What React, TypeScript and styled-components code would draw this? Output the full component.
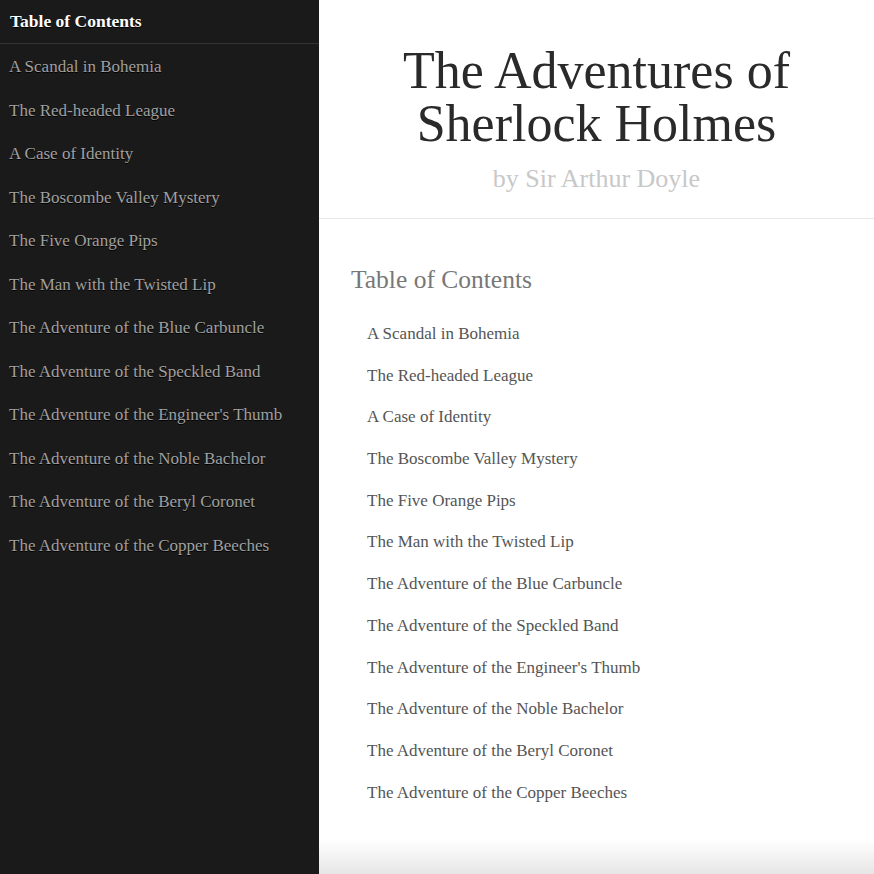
import React from "react";
import styled, { createGlobalStyle } from "styled-components";

const GlobalStyle = createGlobalStyle`
  html, body { margin: 0; padding: 0; height: 100%; }
  body { font-family: "Liberation Serif", "DejaVu Serif", serif; background: #fff; }
  #root { height: 100%; }
`;

const chapters = [
  "A Scandal in Bohemia",
  "The Red-headed League",
  "A Case of Identity",
  "The Boscombe Valley Mystery",
  "The Five Orange Pips",
  "The Man with the Twisted Lip",
  "The Adventure of the Blue Carbuncle",
  "The Adventure of the Speckled Band",
  "The Adventure of the Engineer's Thumb",
  "The Adventure of the Noble Bachelor",
  "The Adventure of the Beryl Coronet",
  "The Adventure of the Copper Beeches",
];

const Layout = styled.div`
  display: flex;
  height: 874px;
  overflow: hidden;
`;

const Sidebar = styled.nav`
  width: 319px;
  flex: none;
  background: #1a1a1a;
  display: flex;
  flex-direction: column;
`;

const SideHeader = styled.div`
  height: 44px;
  box-sizing: border-box;
  padding: 0 10px;
  display: flex;
  align-items: center;
  color: #fff;
  font-weight: bold;
  font-size: 17.5px;
  border-bottom: 1px solid #333;
  text-shadow: 0 1px 0 #000;
`;

const SideList = styled.ul`
  list-style: none;
  margin: 0;
  padding: 12px 0 0;
  display: flex;
  flex-direction: column;
`;

const SideItem = styled.li`
  height: 43.5px;
  padding: 0 9px;
  color: #a0a0a0;
  font-size: 17px;
  line-height: 22px;
  text-shadow: 0 1px 0 #000;
`;

const Main = styled.main`
  flex: 1;
  display: flex;
  flex-direction: column;
  background: linear-gradient(
    to bottom,
    #fff 0,
    #fff calc(100% - 34px),
    #e6e6e6 100%
  );
`;

const Header = styled.header`
  border-bottom: 1px solid #e8e8e8;
  text-align: center;
  padding: 44px 20px 24px;
`;

const Title = styled.h1`
  margin: 0;
  font-weight: normal;
  font-size: 52px;
  line-height: 53px;
  color: #2a2a2a;
`;

const Byline = styled.div`
  margin-top: 14px;
  font-size: 26px;
  line-height: 30px;
  color: #c8c8c8;
`;

const Content = styled.section`
  padding: 46px 32px 0;
`;

const TocTitle = styled.h2`
  margin: 0 0 28px;
  font-weight: normal;
  font-size: 25.5px;
  line-height: 30px;
  color: #777;
`;

const TocList = styled.ul`
  list-style: none;
  margin: 0;
  padding: 0 0 0 16px;
  display: flex;
  flex-direction: column;
`;

const TocItem = styled.li`
  height: 41.7px;
  font-size: 17px;
  line-height: 22px;
  color: #555;
`;

export default function App() {
  return (
    <>
      <GlobalStyle />
      <Layout>
        <Sidebar>
          <SideHeader>Table of Contents</SideHeader>
          <SideList>
            {chapters.map((c) => (
              <SideItem key={c}>{c}</SideItem>
            ))}
          </SideList>
        </Sidebar>
        <Main>
          <Header>
            <Title>
              The Adventures of
              <br />
              Sherlock Holmes
            </Title>
            <Byline>by Sir Arthur Doyle</Byline>
          </Header>
          <Content>
            <TocTitle>Table of Contents</TocTitle>
            <TocList>
              {chapters.map((c) => (
                <TocItem key={c}>{c}</TocItem>
              ))}
            </TocList>
          </Content>
        </Main>
      </Layout>
    </>
  );
}
